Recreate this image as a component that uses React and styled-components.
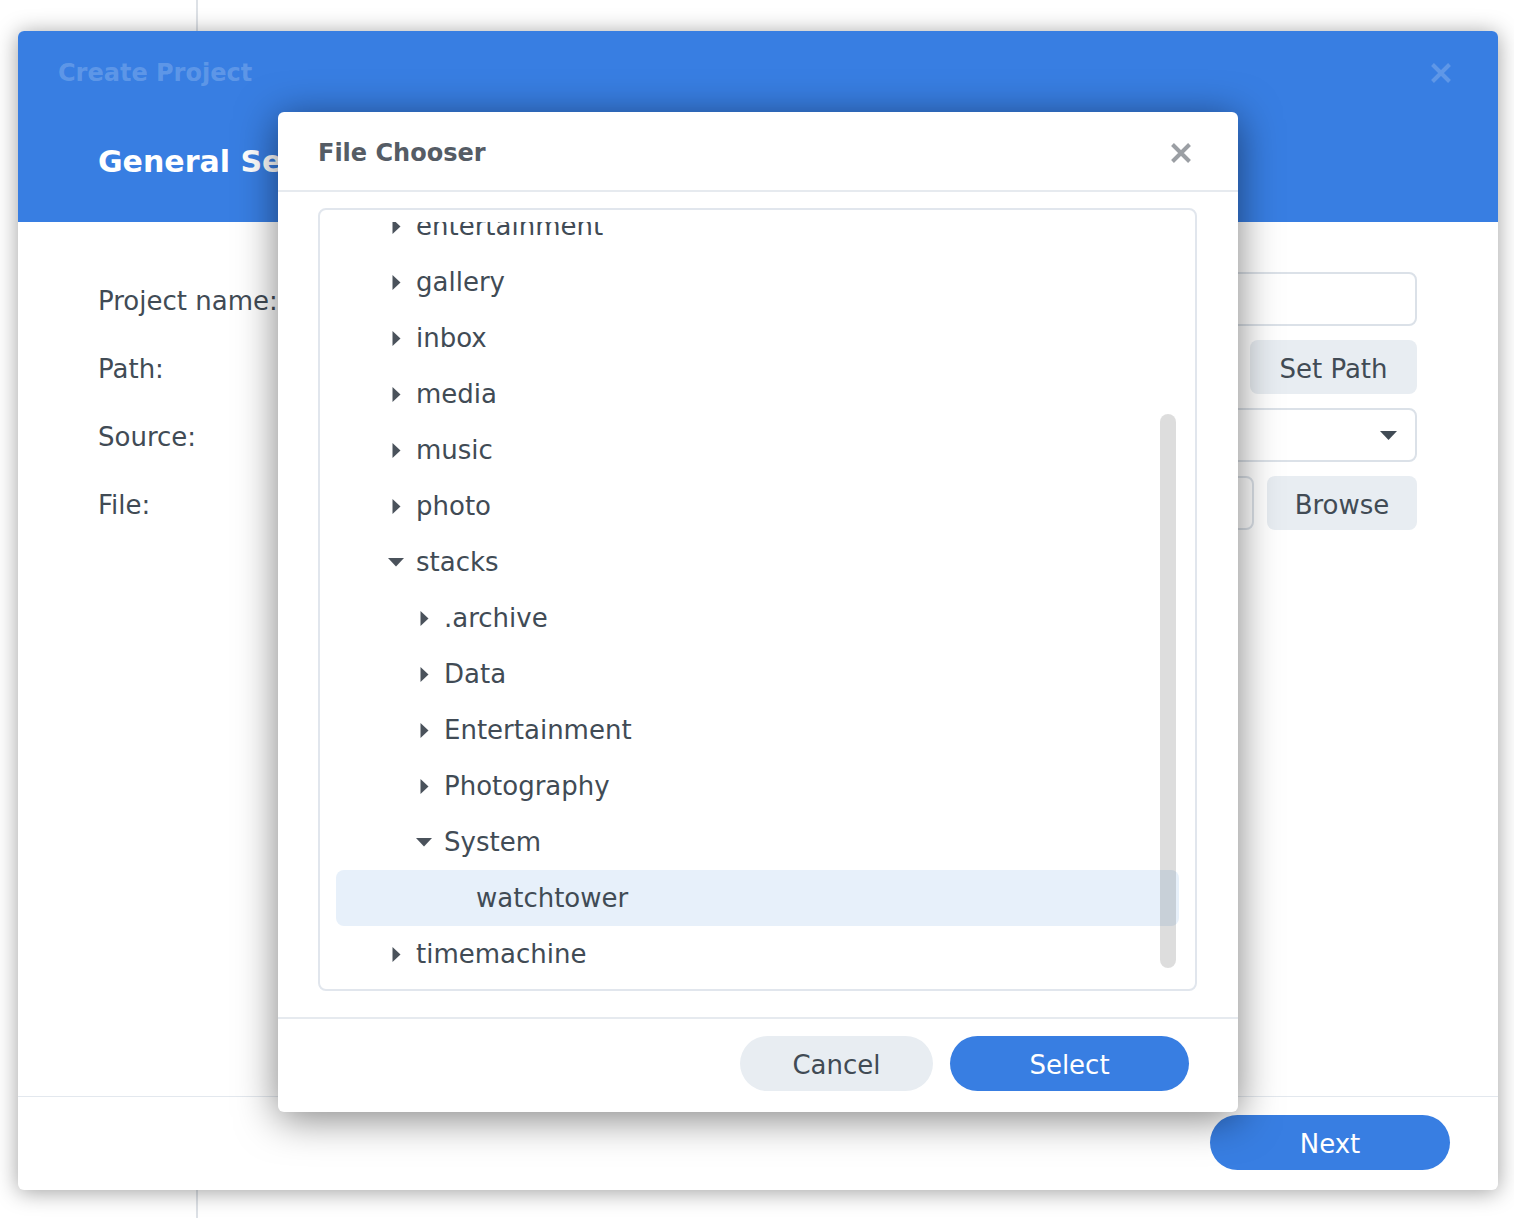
import React from 'react';
import styled, { createGlobalStyle } from 'styled-components';

const GlobalStyle = createGlobalStyle`
  html, body {
    margin: 0;
    padding: 0;
    background: #fff;
  }
  body {
    font-family: "DejaVu Sans", Verdana, sans-serif;
    color: #414b55;
  }
  * { box-sizing: border-box; }
`;

const BLUE = '#387ee2';
const TEXT = '#414b55';
const SOFT = '#e8edf2';

const Page = styled.div`
  width: 1514px;
  height: 1218px;
  overflow: hidden;
  padding: 31px 16px 28px 18px;
  background: linear-gradient(90deg, #fff 0, #fff 196px, #dde1e6 196px, #dde1e6 198px, #fff 198px);
`;

const Wizard = styled.div`
  position: relative;
  height: 1159px;
  display: flex;
  flex-direction: column;
  background: #fff;
  border-radius: 6px;
  box-shadow: 0 2px 22px rgba(0, 0, 0, 0.38);
`;

const WizardHeader = styled.div`
  height: 191px;
  flex: none;
  background: ${BLUE};
  border-radius: 6px 6px 0 0;
  display: flex;
  flex-direction: column;
`;

const TitleBar = styled.div`
  height: 30px;
  margin-top: 27px;
  padding: 0 46px 0 40px;
  display: flex;
  align-items: center;
  justify-content: space-between;
  font-size: 24px;
  font-weight: bold;
  color: rgba(255, 255, 255, 0.2);
`;

const StepTitle = styled.div`
  margin-top: 54px;
  padding-left: 80px;
  font-size: 30px;
  line-height: 40px;
  font-weight: bold;
  color: #fff;
`;

const WizardBody = styled.div`
  flex: 1;
  padding: 50px 81px 0 80px;
`;

const Form = styled.div`
  display: grid;
  grid-template-columns: 320px 1fr;
  grid-auto-rows: 54px;
  row-gap: 14px;
  align-items: center;
`;

const Label = styled.div`
  font-size: 26px;
  padding-top: 4px;
  color: ${TEXT};
`;

const Field = styled.div`
  display: flex;
  height: 54px;
  gap: ${p => p.$gap || 12}px;
`;

const Input = styled.div`
  flex: 1;
  height: 54px;
  border: 2px solid #dbe1e8;
  border-radius: 8px;
  background: #fff;
  display: flex;
  align-items: center;
  justify-content: flex-end;
  padding-right: 18px;
`;

const FlatButton = styled.div`
  flex: none;
  width: ${p => p.$w}px;
  height: 54px;
  padding-top: 3px;
  border-radius: 8px;
  background: ${SOFT};
  display: flex;
  align-items: center;
  justify-content: center;
  font-size: 26px;
  color: ${TEXT};
`;

const WizardFooter = styled.div`
  height: 94px;
  flex: none;
  border-top: 1px solid #e3e8ee;
  padding: 18px 48px 0 0;
  display: flex;
  justify-content: flex-end;
  align-items: flex-start;
`;

const Pill = styled.div`
  width: ${p => p.$w}px;
  height: 55px;
  padding-top: 3px;
  border-radius: 28px;
  background: ${p => (p.$primary ? BLUE : SOFT)};
  color: ${p => (p.$primary ? '#fff' : TEXT)};
  display: flex;
  align-items: center;
  justify-content: center;
  font-size: 26px;
`;

const Chooser = styled.div`
  position: absolute;
  left: 260px;
  top: 81px;
  width: 960px;
  height: 1000px;
  background: #fff;
  border-radius: 6px;
  box-shadow: 0 6px 40px rgba(0, 0, 0, 0.5);
  display: flex;
  flex-direction: column;
`;

const ChooserHeader = styled.div`
  height: 80px;
  flex: none;
  border-bottom: 2px solid #e6eaef;
  padding: 4px 46px 0 40px;
  display: flex;
  align-items: center;
  justify-content: space-between;
  font-size: 24px;
  font-weight: bold;
  color: #555c65;
`;

const ChooserBody = styled.div`
  padding: 16px 41px 0 40px;
`;

const TreeBox = styled.div`
  position: relative;
  height: 783px;
  border: 2px solid #e1e6ed;
  border-radius: 8px;
  padding: 12px 16px;
`;

const Viewport = styled.div`
  height: 755px;
  overflow: hidden;
`;

const List = styled.div`
  margin-top: -24px;
`;

const Row = styled.div`
  height: 56px;
  border-radius: 8px;
  display: flex;
  align-items: center;
  padding-left: ${p => 52 + p.$level * 28}px;
  background: ${p => (p.$selected ? '#e7f0fa' : 'transparent')};
  font-size: 26px;
  color: ${TEXT};
`;

const Toggle = styled.span`
  width: 16px;
  flex: none;
  margin-right: 12px;
  display: flex;
  align-items: center;
  justify-content: center;
`;

const LeafName = styled.span`
  margin-left: 32px;
`;

const ScrollThumb = styled.div`
  position: absolute;
  top: 204px;
  right: 19px;
  width: 16px;
  height: 554px;
  border-radius: 8px;
  background: rgba(0, 0, 0, 0.135);
`;

const ChooserFooter = styled.div`
  margin-top: 26px;
  flex: 1;
  border-top: 2px solid #e6eaef;
  padding: 17px 49px 0 0;
  display: flex;
  justify-content: flex-end;
  align-items: flex-start;
  gap: 17px;
`;

const CloseIcon = ({ color }) => (
  <svg width="22" height="22" viewBox="0 0 22 22">
    <path d="M2.5 2.5 L19.5 19.5 M19.5 2.5 L2.5 19.5" stroke={color} strokeWidth="4" strokeLinecap="butt" fill="none" />
  </svg>
);

const Caret = ({ open }) =>
  open ? (
    <svg width="16" height="9" viewBox="0 0 16 9">
      <path d="M0 0 H16 L8 8.5 Z" fill="#4a525b" />
    </svg>
  ) : (
    <svg width="9" height="15" viewBox="0 0 9 15">
      <path d="M0.5 0 L8.5 7.5 L0.5 15 Z" fill="#4a525b" />
    </svg>
  );

const tree = [
  { name: 'entertainment', level: 0 },
  { name: 'gallery', level: 0 },
  { name: 'inbox', level: 0 },
  { name: 'media', level: 0 },
  { name: 'music', level: 0 },
  { name: 'photo', level: 0 },
  { name: 'stacks', level: 0, open: true },
  { name: '.archive', level: 1 },
  { name: 'Data', level: 1 },
  { name: 'Entertainment', level: 1 },
  { name: 'Photography', level: 1 },
  { name: 'System', level: 1, open: true },
  { name: 'watchtower', level: 2, leaf: true, selected: true },
  { name: 'timemachine', level: 0 },
];

const App = () => (
  <>
    <GlobalStyle />
    <Page>
      <Wizard>
        <WizardHeader>
          <TitleBar>
            <span>Create Project</span>
            <CloseIcon color="rgba(255,255,255,0.2)" />
          </TitleBar>
          <StepTitle>General Settings</StepTitle>
        </WizardHeader>

        <WizardBody>
          <Form>
            <Label>Project name:</Label>
            <Field>
              <Input />
            </Field>
            <Label>Path:</Label>
            <Field $gap={12}>
              <Input />
              <FlatButton $w={167}>Set Path</FlatButton>
            </Field>
            <Label>Source:</Label>
            <Field>
              <Input>
                <svg width="17" height="9" viewBox="0 0 17 9">
                  <path d="M0 0 H17 L8.5 9 Z" fill={TEXT} />
                </svg>
              </Input>
            </Field>
            <Label>File:</Label>
            <Field $gap={13}>
              <Input />
              <FlatButton $w={150}>Browse</FlatButton>
            </Field>
          </Form>
        </WizardBody>

        <WizardFooter>
          <Pill $primary $w={240}>Next</Pill>
        </WizardFooter>

        <Chooser>
          <ChooserHeader>
            <span>File Chooser</span>
            <CloseIcon color="#9b9fa4" />
          </ChooserHeader>
          <ChooserBody>
            <TreeBox>
              <Viewport>
                <List>
                  {tree.map(item => (
                    <Row key={item.name + item.level} $level={item.level} $selected={item.selected}>
                      {item.leaf ? (
                        <LeafName>{item.name}</LeafName>
                      ) : (
                        <>
                          <Toggle>
                            <Caret open={item.open} />
                          </Toggle>
                          <span>{item.name}</span>
                        </>
                      )}
                    </Row>
                  ))}
                </List>
              </Viewport>
              <ScrollThumb />
            </TreeBox>
          </ChooserBody>
          <ChooserFooter>
            <Pill $w={193}>Cancel</Pill>
            <Pill $primary $w={239}>Select</Pill>
          </ChooserFooter>
        </Chooser>
      </Wizard>
    </Page>
  </>
);

export default App;
